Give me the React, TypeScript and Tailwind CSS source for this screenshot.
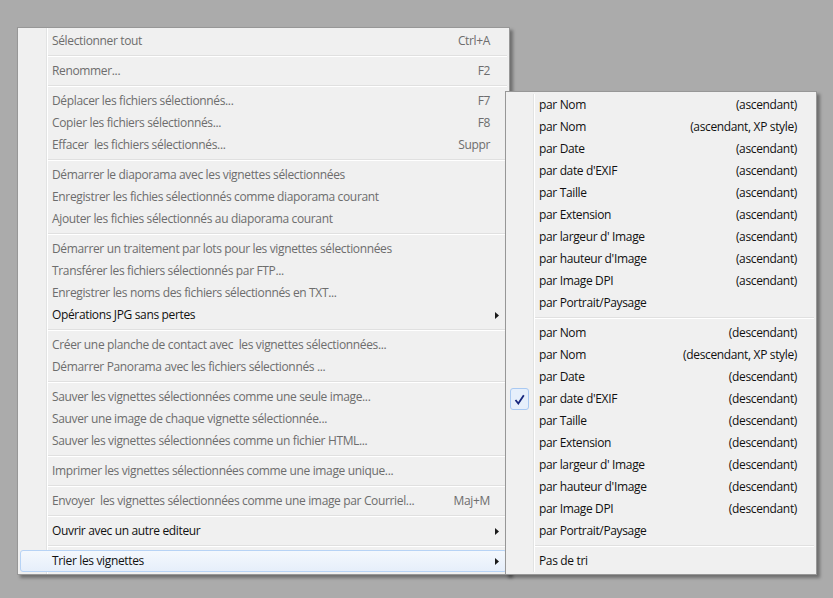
import type { ReactNode } from "react";

type MenuEntry =
  | { kind: "sep" }
  | {
      kind: "item";
      label: string;
      shortcut?: string;
      disabled?: boolean;
      submenu?: boolean;
      active?: boolean;
    };

const sep: MenuEntry = { kind: "sep" };
const off = (label: string, shortcut?: string): MenuEntry => ({ kind: "item", label, shortcut, disabled: true });

const mainEntries: MenuEntry[] = [
  off("Sélectionner tout", "Ctrl+A"),
  sep,
  off("Renommer...", "F2"),
  sep,
  off("Déplacer les fichiers sélectionnés...", "F7"),
  off("Copier les fichiers sélectionnés...", "F8"),
  off("Effacer  les fichiers sélectionnés...", "Suppr"),
  sep,
  off("Démarrer le diaporama avec les vignettes sélectionnées"),
  off("Enregistrer les fichies sélectionnés comme diaporama courant"),
  off("Ajouter les fichies sélectionnés au diaporama courant"),
  sep,
  off("Démarrer un traitement par lots pour les vignettes sélectionnées"),
  off("Transférer les fichiers sélectionnés par FTP..."),
  off("Enregistrer les noms des fichiers sélectionnés en TXT..."),
  { kind: "item", label: "Opérations JPG sans pertes", submenu: true },
  sep,
  off("Créer une planche de contact avec  les vignettes sélectionnées..."),
  off("Démarrer Panorama avec les fichiers sélectionnés ..."),
  sep,
  off("Sauver les vignettes sélectionnées comme une seule image..."),
  off("Sauver une image de chaque vignette sélectionnée..."),
  off("Sauver les vignettes sélectionnées comme un fichier HTML..."),
  sep,
  off("Imprimer les vignettes sélectionnées comme une image unique..."),
  sep,
  off("Envoyer  les vignettes sélectionnées comme une image par Courriel...", "Maj+M"),
  sep,
  { kind: "item", label: "Ouvrir avec un autre editeur", submenu: true },
  sep,
  { kind: "item", label: "Trier les vignettes", submenu: true, active: true },
];

const sortKeys = [
  "par Nom",
  "par Nom",
  "par Date",
  "par date d'EXIF",
  "par Taille",
  "par Extension",
  "par largeur d' Image",
  "par hauteur d'Image",
  "par Image DPI",
  "par Portrait/Paysage",
];

function sortGroup(dir: "ascendant" | "descendant") {
  return sortKeys.map((label, i) => ({
    label,
    order: i === 9 ? "" : i === 1 ? `(${dir}, XP style)` : `(${dir})`,
    checked: dir === "descendant" && i === 3,
  }));
}

const font = "font-['Segoe_UI','Open_Sans','Noto_Sans',sans-serif] text-[12px] tracking-[-0.35px]";

function Arrow() {
  return (
    <svg width="4" height="7" viewBox="0 0 4 7" className="shrink-0">
      <path d="M0 0 L4 3.5 L0 7 Z" fill="#1a1a1a" />
    </svg>
  );
}

function Separator({ gutter }: { gutter: number }) {
  return (
    <div className="flex h-[8px] items-center">
      <div style={{ width: gutter }} className="h-full shrink-0" />
      <div className="flex-1">
        <div className="h-px bg-[#e0e0e0]" />
        <div className="h-px bg-white" />
      </div>
    </div>
  );
}

function Gutter({ left }: { left: number }) {
  return (
    <div className="pointer-events-none absolute top-0 bottom-0 flex" style={{ left }}>
      <div className="w-px bg-[#e2e3e3]" />
      <div className="w-px bg-white" />
    </div>
  );
}

function MenuFrame({ children, className }: { children: ReactNode; className: string }) {
  return (
    <div
      className={`border border-[#979797] bg-[#f0f0f0] p-[2px] shadow-[3px_3px_3px_rgba(0,0,0,0.35)] ${font} ${className}`}
    >
      {children}
    </div>
  );
}

function MainMenu() {
  return (
    <MenuFrame className="relative w-[493px]">
      <Gutter left={28} />
      {mainEntries.map((entry, i) =>
        entry.kind === "sep" ? (
          <Separator key={i} gutter={28} />
        ) : (
          <div
            key={i}
            className={`relative flex h-[22px] items-center rounded-[3px] border pl-[31px] pr-[7px] ${
              entry.active
                ? "border-[#b7d3f5] bg-[linear-gradient(180deg,#f4f8fd,#e6eefa)]"
                : "border-transparent"
            } ${entry.disabled ? "text-[#6d6d6d]" : "text-[#111]"}`}
          >
            <span className="flex-1 whitespace-pre">{entry.label}</span>
            {entry.shortcut ? <span className="mr-[9px]">{entry.shortcut}</span> : null}
            {entry.submenu ? <Arrow /> : null}
          </div>
        ),
      )}
    </MenuFrame>
  );
}

function SortMenu() {
  const rows = [...sortGroup("ascendant"), null, ...sortGroup("descendant"), null, { label: "Pas de tri", order: "", checked: false }];

  return (
    <MenuFrame className="absolute left-[505px] top-[91px] w-[312px]">
      <div className="relative">
        <Gutter left={25} />
        {rows.map((row, i) =>
          row === null ? (
            <Separator key={i} gutter={27} />
          ) : (
            <div key={i} className="relative flex h-[22px] items-center pl-[31px] pr-[17px] text-[#111]">
              {row.checked ? (
                <div className="absolute left-[2px] top-0 flex h-[22px] w-[19px] items-center justify-center rounded-[3px] border border-[#a9c9f2] bg-[#e6effb]">
                  <svg width="11" height="11" viewBox="0 0 11 11">
                    <path d="M1.5 6 L4.3 9.5 L9.8 1.2" fill="none" stroke="#16267e" strokeWidth="1.8" />
                  </svg>
                </div>
              ) : null}
              <span className="flex-1">{row.label}</span>
              <span>{row.order}</span>
            </div>
          ),
        )}
      </div>
    </MenuFrame>
  );
}

export default function App() {
  return (
    <div className="relative h-[598px] w-[833px] overflow-hidden bg-[#ababab] pl-[17px] pt-[27px]">
      <MainMenu />
      <SortMenu />
    </div>
  );
}
